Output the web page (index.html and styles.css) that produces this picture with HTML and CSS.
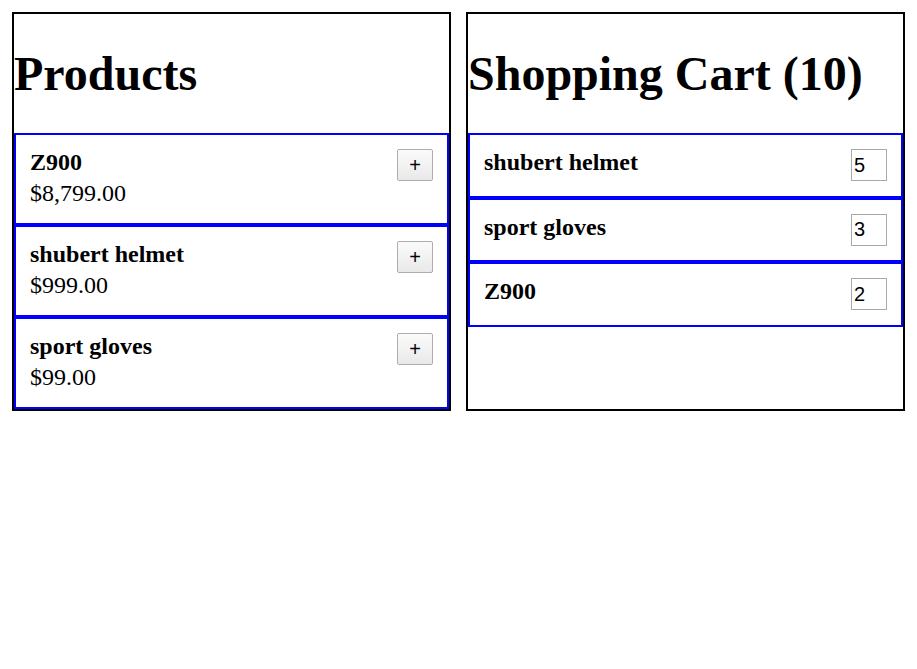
FILE: index.html
```html
<!DOCTYPE html>
<html>
<head>
<meta charset="utf-8">
<title>Shop</title>
<link rel="stylesheet" href="styles.css">
</head>
<body>
<div class="layout">
  <section class="panel">
    <h1 class="title">Products</h1>
    <div class="card product">
      <div class="row">
        <span class="name">Z900</span>
        <button class="add">+</button>
      </div>
      <div class="price">$8,799.00</div>
    </div>
    <div class="card product">
      <div class="row">
        <span class="name">shubert helmet</span>
        <button class="add">+</button>
      </div>
      <div class="price">$999.00</div>
    </div>
    <div class="card product">
      <div class="row">
        <span class="name">sport gloves</span>
        <button class="add">+</button>
      </div>
      <div class="price">$99.00</div>
    </div>
  </section>
  <section class="panel">
    <h1 class="title">Shopping Cart (10)</h1>
    <div class="card cart-item">
      <div class="row">
        <span class="name">shubert helmet</span>
        <input class="qty" type="text" value="5">
      </div>
    </div>
    <div class="card cart-item">
      <div class="row">
        <span class="name">sport gloves</span>
        <input class="qty" type="text" value="3">
      </div>
    </div>
    <div class="card cart-item">
      <div class="row">
        <span class="name">Z900</span>
        <input class="qty" type="text" value="2">
      </div>
    </div>
  </section>
</div>
</body>
</html>
```
FILE: styles.css
```css
html, body {
  background: #fff;
}
body {
  margin: 12px;
  font-family: "Liberation Serif", "Times New Roman", serif;
  color: #000;
}
.layout {
  display: flex;
  gap: 15px;
  align-items: stretch;
}
.panel {
  flex: 1;
  border: 2px solid #000;
  min-width: 0;
}
.title {
  font-size: 48px;
  line-height: 55px;
  font-weight: bold;
  margin: 32px 0;
}
.card {
  border: 2px solid #0000ff;
  padding: 14px;
}
.product {
  padding-bottom: 16px;
}
.cart-item {
  padding-bottom: 14.5px;
}
.row {
  display: flex;
  justify-content: space-between;
  align-items: flex-start;
}
.name {
  font-weight: bold;
  font-size: 24px;
  line-height: 26px;
}
.price {
  font-size: 24px;
  line-height: 28px;
  margin-top: -2px;
}
.add {
  width: 36px;
  height: 32px;
  margin: 0;
  padding: 0;
  border: 1px solid #adadad;
  border-radius: 2px;
  background: linear-gradient(#fbfbfb, #e9e9e9);
  font-family: "Liberation Sans", Arial, sans-serif;
  font-size: 20px;
  color: #000;
  line-height: 28px;
}
.qty {
  width: 36px;
  height: 32px;
  box-sizing: border-box;
  margin: 0;
  padding: 0 2px;
  border: 1px solid #a9a9a9;
  font-family: "Liberation Sans", Arial, sans-serif;
  font-size: 20px;
  color: #000;
  background: #fff;
}
```
